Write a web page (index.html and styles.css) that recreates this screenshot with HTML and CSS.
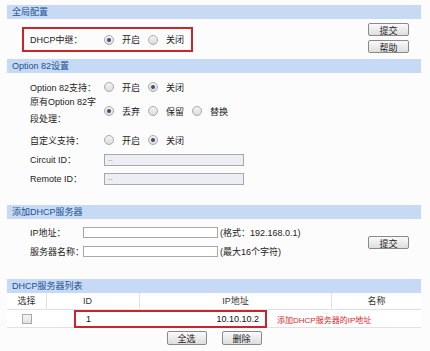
FILE: index.html
```html
<!DOCTYPE html>
<html lang="zh-CN">
<head>
  <meta charset="UTF-8">
  <title>DHCP中继</title>
  <link rel="stylesheet" href="styles.css">
</head>
<body>
  <div class="page">

    <div class="bar">全局配置</div>
    <div class="sec sec-global">
      <div class="mark relay">
        <span class="lbl">DHCP中继：</span>
        <span class="radio on"></span><span class="opt">开启</span>
        <span class="radio"></span><span class="opt">关闭</span>
      </div>
      <div class="btns">
        <button class="btn">提交</button>
        <button class="btn">帮助</button>
      </div>
    </div>

    <div class="bar">Option 82设置</div>
    <div class="sec sec-opt">
      <div class="row r1">
        <span class="lbl">Option 82支持：</span>
        <span class="radio"></span><span class="opt">开启</span>
        <span class="radio on"></span><span class="opt">关闭</span>
      </div>
      <div class="row r2">
        <span class="lbl two">原有Option 82字<br>段处理：</span>
        <span class="radio on"></span><span class="opt">丢弃</span>
        <span class="radio"></span><span class="opt">保留</span>
        <span class="radio"></span><span class="opt">替换</span>
      </div>
      <div class="row r3">
        <span class="lbl">自定义支持：</span>
        <span class="radio"></span><span class="opt">开启</span>
        <span class="radio on"></span><span class="opt">关闭</span>
      </div>
      <div class="row r4">
        <span class="lbl">Circuit ID：</span>
        <span class="field off">--</span>
      </div>
      <div class="row r5">
        <span class="lbl">Remote ID：</span>
        <span class="field off">--</span>
      </div>
    </div>

    <div class="bar">添加DHCP服务器</div>
    <div class="sec sec-add">
      <div class="add-rows">
        <div class="row">
          <span class="lbl short">IP地址：</span>
          <span class="field ip"></span>
          <span class="note">(格式：192.168.0.1)</span>
        </div>
        <div class="row">
          <span class="lbl short">服务器名称：</span>
          <span class="field ip"></span>
          <span class="note">(最大16个字符)</span>
        </div>
      </div>
      <button class="btn">提交</button>
    </div>

    <div class="bar">DHCP服务器列表</div>
    <div class="list">
      <div class="thead">
        <span class="c-sel">选择</span>
        <span class="c-id">ID</span>
        <span class="c-ip">IP地址</span>
        <span class="c-name">名称</span>
      </div>
      <div class="trow">
        <span class="c-sel"><span class="check"></span></span>
        <span class="c-rest">
          <span class="mark entry">
            <span>1</span>
            <span>10.10.10.2</span>
          </span>
          <span class="hint">添加DHCP服务器的IP地址</span>
        </span>
      </div>
    </div>
    <div class="list-btns">
      <button class="btn">全选</button>
      <button class="btn">删除</button>
    </div>

  </div>
</body>
</html>
```

FILE: styles.css
```css
body {
  margin: 0;
  background-color: #fcfcfc;
  font-family: "Liberation Sans", "Noto Sans CJK SC", sans-serif;
  font-size: 9px;
  color: #222;
}

.page {
  width: 414px;
  margin-left: 7px;
  padding-top: 5px;
}

.bar {
  height: 14px;
  line-height: 14px;
  padding-left: 5px;
  background-color: #c6daf5;
  color: #1d4f91;
}

.sec {
  display: flex;
  justify-content: space-between;
}

/* red annotation frames */
.mark {
  border: 2px solid #c8262c;
  box-sizing: border-box;
}

.lbl {
  width: 74px;
  flex-shrink: 0;
  white-space: nowrap;
}

.lbl.two {
  line-height: 17px;
}

.lbl.short {
  width: 53px;
}

.radio {
  width: 8px;
  height: 8px;
  border: 1px solid #a9a9a9;
  border-radius: 50%;
  background: linear-gradient(#f4f4f4, #dcdcdc);
  margin-right: 8px;
  position: relative;
  flex-shrink: 0;
}

.radio.on::after {
  content: "";
  position: absolute;
  left: 2px;
  top: 2px;
  width: 4px;
  height: 4px;
  border-radius: 50%;
  background-color: #3a4f6a;
}

.opt {
  margin-right: 8px;
  white-space: nowrap;
  flex-shrink: 0;
}

.sec-global {
  height: 40px;
}

.relay {
  display: flex;
  align-items: center;
  margin: 8px 0 0 15px;
  width: 171px;
  height: 25px;
  padding-left: 6px;
}

.relay .opt:last-child {
  margin-right: 0;
}

.btns {
  display: flex;
  flex-direction: column;
  gap: 4px;
  margin: 4px 12px 0 0;
}

.btn {
  width: 41px;
  height: 13px;
  padding: 0;
  font-family: inherit;
  font-size: 9px;
  color: #222;
  border: 1px solid #8a8a8a;
  border-radius: 2px;
  background: linear-gradient(#fafafa, #dedede);
}

.sec-opt {
  display: block;
  height: 126px;
  padding-top: 6px;
}

.row {
  display: flex;
  align-items: center;
  padding-left: 23px;
}

.r1 { height: 16px; }
.r2 { height: 32px; }
.r3 { height: 16px; margin-top: 5px; }
.r4 { height: 19px; margin-top: 2px; }
.r5 { height: 19px; }

.field {
  height: 12px;
  box-sizing: border-box;
  border: 1px solid #a8a8a8;
  background-color: #fff;
}

.field.off {
  width: 140px;
  padding-left: 3px;
  line-height: 9px;
  font-size: 7px;
  color: #999;
  background-color: #eceef4;
}

.field.ip {
  width: 135px;
  height: 11px;
}

.note {
  margin-left: 2px;
  white-space: nowrap;
}

.sec-add {
  height: 56px;
  padding-top: 4px;
  align-items: flex-start;
}

.add-rows {
  display: flex;
  flex-direction: column;
  gap: 1px;
}

.add-rows .row {
  height: 18px;
}

.sec-add .btn {
  margin: 13px 12px 0 0;
}

.list {
  background-color: #fff;
}

.thead, .trow {
  display: grid;
  grid-template-columns: 40px 93px 192px 89px;
  border-bottom: 1px solid #e2e2e2;
}

.thead {
  height: 16px;
  line-height: 16px;
  color: #333;
}

.thead span {
  border-right: 1px solid #e2e2e2;
}

.thead span:last-child {
  border-right: none;
}

.c-sel, .c-ip, .c-name {
  text-align: center;
}

.c-id {
  padding-left: 36px;
}

.trow {
  height: 17px;
  align-items: center;
}

.c-sel {
  display: flex;
  justify-content: center;
  align-items: center;
}

.check {
  width: 8px;
  height: 8px;
  border: 1px solid #a9a9a9;
  background: linear-gradient(#f6f6f6, #e0e0e0);
}

.c-rest {
  grid-column: 2 / 5;
  display: flex;
  align-items: center;
}

.entry {
  display: flex;
  justify-content: space-between;
  align-items: center;
  width: 193px;
  height: 18px;
  margin-left: 27px;
  padding: 0 6px 0 10px;
  color: #111;
}

.hint {
  margin-left: 10px;
  font-size: 8px;
  color: #d42a2a;
}

.list-btns {
  display: flex;
  justify-content: center;
  gap: 15px;
  margin-top: 3px;
}

.list-btns .btn {
  width: 40px;
  height: 14px;
}
```
